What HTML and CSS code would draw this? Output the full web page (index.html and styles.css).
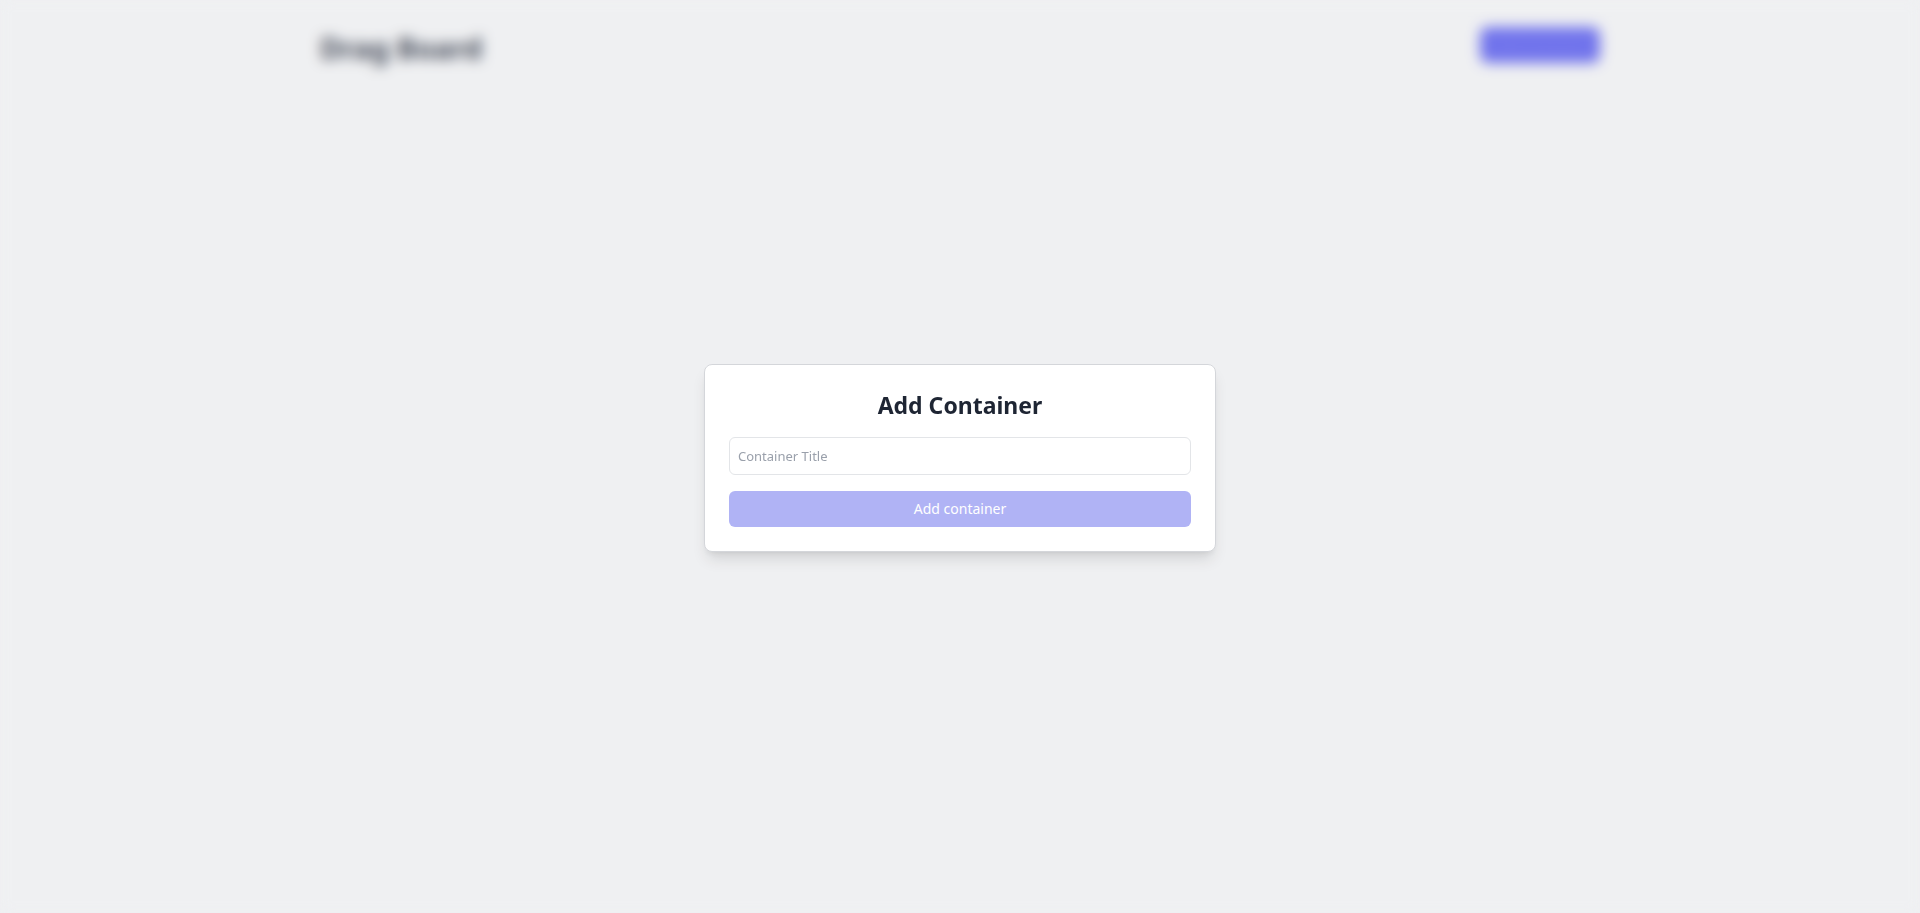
FILE: index.html
```html
<!DOCTYPE html>
<html lang="en">
<head>
<meta charset="utf-8">
<title>Drag Board</title>
<link rel="stylesheet" href="styles.css">
</head>
<body>
  <div class="page">
    <header class="header">
      <h1 class="brand">Drag Board</h1>
      <button class="header-btn" type="button">Add Container</button>
    </header>
  </div>

  <div class="overlay">
    <div class="modal">
      <h2 class="modal-title">Add Container</h2>
      <input class="modal-input" type="text" placeholder="Container Title" autofocus>
      <button class="modal-btn" type="button" disabled>Add container</button>
    </div>
  </div>
</body>
</html>
```

FILE: styles.css
```css
* { box-sizing: border-box; }

html, body {
  margin: 0;
  height: 100%;
}

body {
  background: #f0f1f3;
  font-family: "Noto Sans", "Open Sans", sans-serif;
  color: #1f2937;
}

.page {
  max-width: 1280px;
  margin: 0 auto;
}

.header {
  display: flex;
  align-items: center;
  justify-content: space-between;
  padding-top: 24px;
}

.brand {
  margin: 6px 0 0;
  font-size: 29px;
  line-height: 36px;
  font-weight: 700;
  color: #3a4150;
}

.header-btn {
  border: none;
  background: #6a6ded;
  color: #7477ef;
  font-family: inherit;
  font-size: 13px;
  line-height: 20px;
  padding: 8px 16px;
  border-radius: 8px;
  width: 120px;
  height: 36px;
}

.overlay {
  position: fixed;
  inset: 0;
  display: flex;
  align-items: center;
  justify-content: center;
  backdrop-filter: blur(7px);
  background: rgba(240, 241, 243, 0.05);
  padding-top: 2px;
}

.modal {
  width: 512px;
  background: #ffffff;
  border: 1px solid #d4d6da;
  border-radius: 8px;
  padding: 24px;
  box-shadow: 0 10px 15px -3px rgba(0, 0, 0, 0.12), 0 4px 6px -4px rgba(0, 0, 0, 0.1);
  display: flex;
  flex-direction: column;
}

.modal-title {
  margin: 0 0 16px;
  text-align: center;
  font-size: 23px;
  line-height: 32px;
  font-weight: 700;
  color: #1e2533;
}

.modal-input {
  height: 38px;
  border: 1px solid #e3e5e8;
  border-radius: 6px;
  padding: 0 8px;
  font-family: inherit;
  font-size: 13px;
  color: #1f2937;
  outline: none;
  margin-bottom: 16px;
}

.modal-input::placeholder {
  color: #9aa0ab;
}

.modal-btn {
  height: 36px;
  border: none;
  border-radius: 6px;
  background: #b0b3f5;
  color: #ffffff;
  font-family: inherit;
  font-size: 14px;
}
```
